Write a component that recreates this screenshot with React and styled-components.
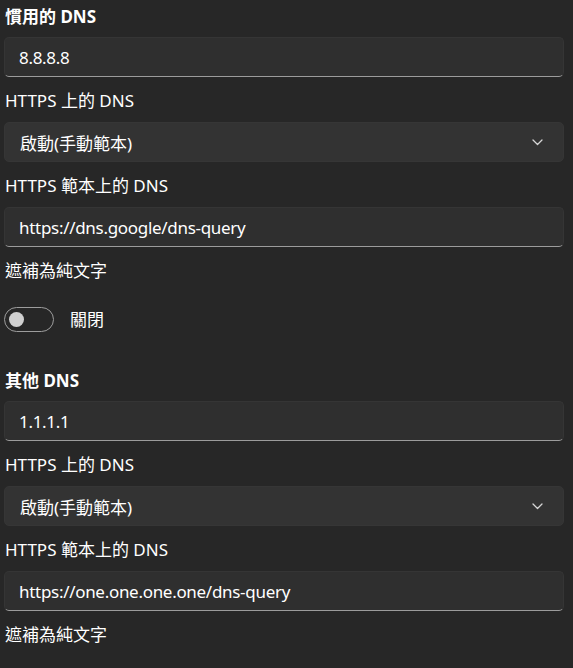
import React from 'react';
import styled, { createGlobalStyle } from 'styled-components';

const GlobalStyle = createGlobalStyle`
  html, body {
    margin: 0;
    padding: 0;
    background: #272727;
  }
  body {
    font-family: "Noto Sans", "Noto Sans CJK TC", sans-serif;
    color: #ffffff;
    -webkit-font-smoothing: antialiased;
  }
`;

const Page = styled.div`
  width: 573px;
  min-height: 668px;
  padding: 5px 9px 0 4px;
  box-sizing: border-box;
  background: #272727;
`;

const Section = styled.section`
  display: flex;
  flex-direction: column;
  & + & {
    margin-top: 37px;
  }
`;

const Heading = styled.h2`
  margin: 0 0 8px 1px;
  font-size: 17px;
  line-height: 24px;
  font-weight: 700;
  color: #ffffff;
`;

const Label = styled.div`
  margin: 12px 0 9px 1px;
  font-size: 17px;
  line-height: 24px;
  font-weight: 400;
  color: #ffffff;
`;

const TextField = styled.div`
  height: 40px;
  box-sizing: border-box;
  display: flex;
  align-items: center;
  padding: 0 14px;
  border-radius: 5px;
  background: #2f2f2f;
  border: 1px solid #353535;
  border-bottom: 1px solid #9c9c9c;
  font-size: 17px;
  letter-spacing: -0.3px;
  color: #ffffff;
`;

const Select = styled.div`
  height: 40px;
  box-sizing: border-box;
  display: flex;
  align-items: center;
  justify-content: space-between;
  padding: 0 20px 0 15px;
  border-radius: 5px;
  background: #333333;
  border: 1px solid #363636;
  font-size: 17px;
  color: #ffffff;
`;

const ToggleRow = styled.div`
  display: flex;
  align-items: center;
  gap: 16px;
  margin-top: 15px;
  font-size: 17px;
  line-height: 24px;
`;

const Track = styled.div`
  width: 50px;
  height: 25px;
  box-sizing: border-box;
  border-radius: 13px;
  border: 1px solid #9d9d9d;
  display: flex;
  align-items: center;
  padding-left: 4px;
`;

const Knob = styled.div`
  width: 15px;
  height: 15px;
  border-radius: 50%;
  background: #d0d0d0;
`;

const Chevron = () => (
  <svg width="11" height="7" viewBox="0 0 11 7" fill="none">
    <path d="M1 1l4.5 4.5L10 1" stroke="#d6d6d6" strokeWidth="1.3" strokeLinecap="round" strokeLinejoin="round" />
  </svg>
);

function DnsSection({ title, address, template, showToggle }) {
  return (
    <Section>
      <Heading>{title}</Heading>
      <TextField>{address}</TextField>
      <Label>HTTPS 上的 DNS</Label>
      <Select>
        <span>啟動(手動範本)</span>
        <Chevron />
      </Select>
      <Label>HTTPS 範本上的 DNS</Label>
      <TextField>{template}</TextField>
      <Label>遮補為純文字</Label>
      {showToggle && (
        <ToggleRow>
          <Track>
            <Knob />
          </Track>
          <span>關閉</span>
        </ToggleRow>
      )}
    </Section>
  );
}

export default function App() {
  return (
    <Page>
      <GlobalStyle />
      <DnsSection title="慣用的 DNS" address="8.8.8.8" template="https://dns.google/dns-query" showToggle />
      <DnsSection title="其他 DNS" address="1.1.1.1" template="https://one.one.one.one/dns-query" />
    </Page>
  );
}
